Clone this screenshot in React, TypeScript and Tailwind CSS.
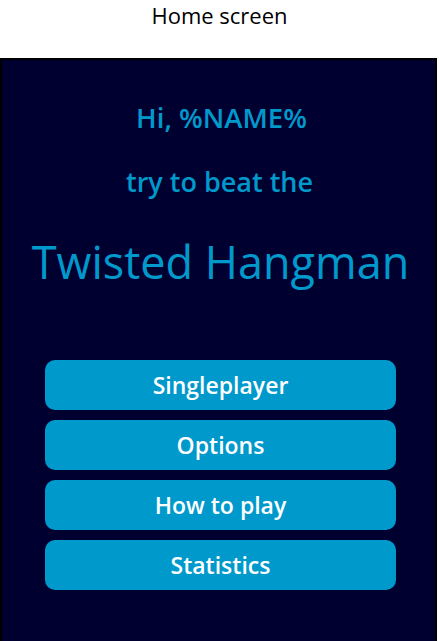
const buttons = ["Singleplayer", "Options", "How to play", "Statistics"];

export default function App() {
  return (
    <div className="w-[439px] h-[641px] overflow-hidden bg-white font-['Open_Sans',sans-serif]">
      {/* Caption above the mockup */}
      <div className="h-[58px] text-center text-[22px] leading-[30px] text-black">
        Home screen
      </div>

      {/* Phone screen */}
      <div className="w-[437px] h-[600px] bg-[#000030] border-2 border-b-0 border-black flex flex-col items-center">
        <div className="mt-[40px] pl-[6px] text-[27.5px] leading-[36px] font-semibold text-[#0099cc]">
          Hi, %NAME%
        </div>
        <div className="mt-[28px] pl-[2px] text-[27px] leading-[36px] font-semibold text-[#0099cc]">
          try to beat the
        </div>
        <div className="mt-[32px] pl-[4px] text-[45px] leading-[60px] text-[#0099cc]">
          Twisted Hangman
        </div>

        <div className="mt-[68px] flex flex-col gap-[10px] pl-[4px]">
          {buttons.map((label) => (
            <button
              key={label}
              className="w-[351px] h-[50px] rounded-[10px] bg-[#0099cc] text-white text-[23px] font-semibold"
            >
              {label}
            </button>
          ))}
        </div>
      </div>
    </div>
  );
}
